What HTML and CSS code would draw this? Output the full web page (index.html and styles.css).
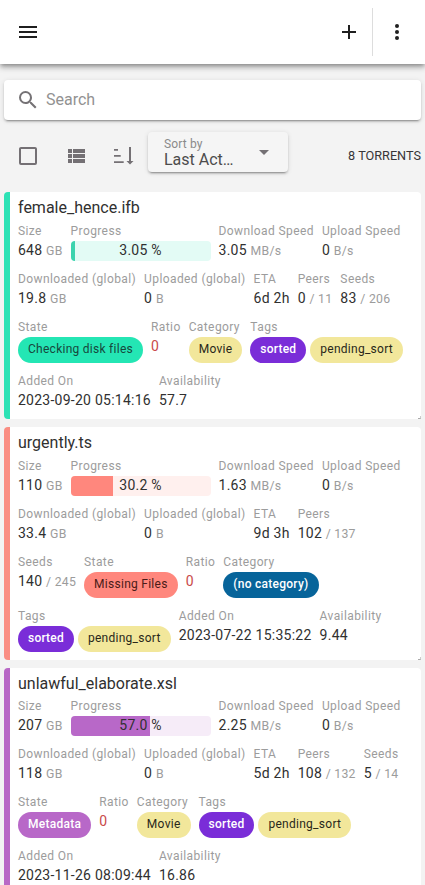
FILE: index.html
```html
<!DOCTYPE html>
<html lang="en">
<head>
<meta charset="utf-8">
<title>Torrents</title>
<link rel="stylesheet" href="styles.css">
</head>
<body>
<header class="appbar">
  <svg class="icon" viewBox="0 0 24 24"><path d="M3,6H21V8H3V6M3,11H21V13H3V11M3,16H21V18H3V16Z"/></svg>
  <span class="spacer"></span>
  <svg class="icon" viewBox="0 0 24 24"><path d="M19,13H13V19H11V13H5V11H11V5H13V11H19V13Z"/></svg>
  <span class="divider"></span>
  <svg class="icon" viewBox="0 0 24 24"><circle cx="12" cy="6" r="2"/><circle cx="12" cy="12" r="2"/><circle cx="12" cy="18" r="2"/></svg>
</header>
<main class="page">
  <div class="search">
    <svg class="icon" viewBox="0 0 24 24"><path d="M9.5,3A6.5,6.5 0 0,1 16,9.5C16,11.11 15.41,12.59 14.44,13.73L14.71,14H15.5L20.5,19L19,20.5L14,15.5V14.71L13.73,14.44C12.59,15.41 11.11,16 9.5,16A6.5,6.5 0 0,1 3,9.5A6.5,6.5 0 0,1 9.5,3M9.5,5C7,5 5,7 5,9.5C5,12 7,14 9.5,14C12,14 14,12 14,9.5C14,7 12,5 9.5,5Z"/></svg>
    <span>Search</span>
  </div>
  <div class="tools">
    <svg class="icon" viewBox="0 0 24 24"><path d="M19,3H5C3.89,3 3,3.89 3,5V19A2,2 0 0,0 5,21H19A2,2 0 0,0 21,19V5C21,3.89 20.1,3 19,3M19,5V19H5V5H19Z"/></svg>
    <svg class="icon" viewBox="0 0 24 24"><path d="M4 14h4v-4H4v4zm0 5h4v-4H4v4zM4 9h4V5H4v4zm5 5h12v-4H9v4zm0 5h12v-4H9v4zM9 5v4h12V5H9z"/></svg>
    <svg class="icon" viewBox="0 0 24 24"><path d="M2 5H6V6.7H2ZM2 11H8.7V12.7H2ZM2 17.3H11.7V19H2ZM17 3H19V17H21.5L18 20.5L14.5 17H17Z"/></svg>
    <div class="sort">
      <div class="sort-text"><span class="sort-label">Sort by</span><span class="sort-value">Last Act…</span></div>
      <svg class="icon" viewBox="0 0 24 24"><path d="M7,10L12,15L17,10H7Z"/></svg>
    </div>
    <span class="count">8 TORRENTS</span>
  </div>

  <section class="list">
    <article class="card checking">
      <h2>female_hence.ifb</h2>
      <div class="props">
        <div><label>Size</label><p>648 <small>GB</small></p></div>
        <div><label>Progress</label><p class="bar"><i style="width:3.05%"></i><span>3.05 %</span></p></div>
        <div><label>Download Speed</label><p>3.05 <small>MB/s</small></p></div>
        <div><label>Upload Speed</label><p>0 <small>B/s</small></p></div>
        <div><label>Downloaded (global)</label><p>19.8 <small>GB</small></p></div>
        <div><label>Uploaded (global)</label><p>0 <small>B</small></p></div>
        <div><label>ETA</label><p>6d 2h</p></div>
        <div><label>Peers</label><p>0 <small>/ 11</small></p></div>
        <div><label>Seeds</label><p>83 <small>/ 206</small></p></div>
        <div><label>State</label><b class="chip state">Checking disk files</b></div>
        <div><label>Ratio</label><p class="low">0</p></div>
        <div><label>Category</label><b class="chip">Movie</b></div>
        <div><label>Tags</label><div class="chips"><b class="chip sorted">sorted</b><b class="chip">pending_sort</b></div></div>
        <div><label>Added On</label><p>2023-09-20 05:14:16</p></div>
        <div><label>Availability</label><p>57.7</p></div>
      </div>
    </article>

    <article class="card missing">
      <h2>urgently.ts</h2>
      <div class="props">
        <div><label>Size</label><p>110 <small>GB</small></p></div>
        <div><label>Progress</label><p class="bar"><i style="width:30.2%"></i><span>30.2 %</span></p></div>
        <div><label>Download Speed</label><p>1.63 <small>MB/s</small></p></div>
        <div><label>Upload Speed</label><p>0 <small>B/s</small></p></div>
        <div><label>Downloaded (global)</label><p>33.4 <small>GB</small></p></div>
        <div><label>Uploaded (global)</label><p>0 <small>B</small></p></div>
        <div><label>ETA</label><p>9d 3h</p></div>
        <div><label>Peers</label><p>102 <small>/ 137</small></p></div>
        <div><label>Seeds</label><p>140 <small>/ 245</small></p></div>
        <div><label>State</label><b class="chip state">Missing Files</b></div>
        <div><label>Ratio</label><p class="low">0</p></div>
        <div><label>Category</label><b class="chip none">(no category)</b></div>
        <div><label>Tags</label><div class="chips"><b class="chip sorted">sorted</b><b class="chip">pending_sort</b></div></div>
        <div><label>Added On</label><p>2023-07-22 15:35:22</p></div>
        <div><label>Availability</label><p>9.44</p></div>
      </div>
    </article>

    <article class="card metadata">
      <h2>unlawful_elaborate.xsl</h2>
      <div class="props">
        <div><label>Size</label><p>207 <small>GB</small></p></div>
        <div><label>Progress</label><p class="bar"><i style="width:56.5%"></i><span>57.0 %</span></p></div>
        <div><label>Download Speed</label><p>2.25 <small>MB/s</small></p></div>
        <div><label>Upload Speed</label><p>0 <small>B/s</small></p></div>
        <div><label>Downloaded (global)</label><p>118 <small>GB</small></p></div>
        <div><label>Uploaded (global)</label><p>0 <small>B</small></p></div>
        <div><label>ETA</label><p>5d 2h</p></div>
        <div><label>Peers</label><p>108 <small>/ 132</small></p></div>
        <div><label>Seeds</label><p>5 <small>/ 14</small></p></div>
        <div><label>State</label><b class="chip state">Metadata</b></div>
        <div><label>Ratio</label><p class="low">0</p></div>
        <div><label>Category</label><b class="chip">Movie</b></div>
        <div><label>Tags</label><div class="chips"><b class="chip sorted">sorted</b><b class="chip">pending_sort</b></div></div>
        <div><label>Added On</label><p>2023-11-26 08:09:44</p></div>
        <div><label>Availability</label><p>16.86</p></div>
      </div>
    </article>
  </section>
</main>
</body>
</html>
```
FILE: styles.css
```css
* { box-sizing: border-box; margin: 0; padding: 0; }
html, body { height: 885px; overflow: hidden; }
body {
  background: #f3f3f3;
  color: #303030;
  font-family: Roboto, sans-serif;
  font-size: 14px;
}
.icon { width: 24px; height: 24px; fill: currentColor; flex: none; display: block; }

.appbar {
  position: relative;
  display: flex;
  align-items: center;
  height: 64px;
  padding: 0 16px;
  background: #fff;
  color: #1f1f1f;
  box-shadow: 0 2px 4px -1px rgba(0,0,0,.3), 0 4px 5px rgba(0,0,0,.18), 0 1px 10px rgba(0,0,0,.1);
}
.spacer { flex: 1; }
.divider { width: 1px; height: 48px; margin: 0 12px 0 11px; background: #ddd; }

.page { padding: 16px 4px 0; }
.search {
  display: flex;
  align-items: center;
  gap: 6px;
  height: 40px;
  padding: 0 12px;
  border-radius: 4px;
  background: #fff;
  color: #757275;
  font-size: 16px;
  box-shadow: 0 3px 1px -2px rgba(0,0,0,.2), 0 2px 2px rgba(0,0,0,.14), 0 1px 5px rgba(0,0,0,.12);
}
.search span { padding-bottom: 2px; color: #929292; }

.tools { display: flex; align-items: center; height: 40px; margin: 12px 0 20px; padding-left: 12px; color: #747074; }
.tools > .icon { position: relative; top: 4px; }
.tools > .icon + .icon { margin-left: 24px; }
.sort {
  display: flex;
  align-items: center;
  justify-content: space-between;
  width: 140px;
  height: 40px;
  margin-left: 12px;
  padding: 0 12px 0 16px;
  border-radius: 4px;
  background: #f5f5f5;
  box-shadow: 0 3px 1px -2px rgba(0,0,0,.2), 0 2px 2px rgba(0,0,0,.14), 0 1px 5px rgba(0,0,0,.12);
}
.sort-text { display: flex; flex-direction: column; padding-top: 1px; }
.sort-label { font-size: 12px; line-height: 15px; letter-spacing: .15px; color: #8a8a8a; }
.sort-value { font-size: 16px; line-height: 16px; color: #4c4c4c; }
.count { margin-left: auto; padding-top: 6px; font-size: 12.7px; white-space: nowrap; color: #383538; }

.list { display: flex; flex-direction: column; gap: 8px; }
.card {
  position: relative;
  padding: 4px 8px 0;
  border-left: 6px solid var(--state);
  border-radius: 4px;
  background: #fff;
}
.card::after {
  content: "";
  position: absolute;
  right: 0;
  bottom: 0;
  width: 2px;
  height: 2px;
  border-right: 1px solid #ccc;
  border-bottom: 1px solid #aaa;
}
.checking { --state: #2de2b5; --chip: #24e6b4; --soft: #e3fbf5; --ink: #17483c; }
.missing { --state: #fa8e83; --chip: #ff877d; --soft: #fff0ee; --ink: #4a1b18; }
.metadata { --state: #b868c6; --chip: #b868c8; --soft: #f6ecf8; --ink: #fff; }

h2 { height: 24.75px; font-size: 16px; line-height: 24px; font-weight: 400; }
.props { display: flex; flex-wrap: wrap; align-items: flex-start; column-gap: 8px; }
.props > div { padding-bottom: 8px; white-space: nowrap; }
label { display: block; font-size: 12px; line-height: 20px; letter-spacing: .4px; color: #9c9c9c; }
p { height: 20px; line-height: 18.5px; letter-spacing: .25px; }
small { font-size: 12.25px; letter-spacing: .25px; color: #9c9c9c; }
.low { color: #c94a4a; }
.bar {
  display: grid;
  width: 140px;
  border-radius: 4px;
  overflow: hidden;
  background: var(--soft);
}
.bar > * { grid-area: 1 / 1; }
.bar i { background: var(--chip); }
.checking .bar i { background: #3cd3ae; }
.bar span { text-align: center; z-index: 1; }
.chips { display: flex; gap: 4px; }
.chip {
  display: block;
  height: 26px;
  padding: 0 10px;
  border-radius: 13px;
  background: #f2e79b;
  color: #29271a;
  font-size: 12px;
  font-weight: 400;
  line-height: 24px;
  letter-spacing: .27px;
}
.state { background: var(--chip); color: var(--ink); }
.metadata .state { font-weight: 500; }
.sorted { background: #7a2dd8; color: #fff; font-weight: 500; letter-spacing: .2px; }
.none { background: #07649a; color: #fff; font-weight: 500; }
```
